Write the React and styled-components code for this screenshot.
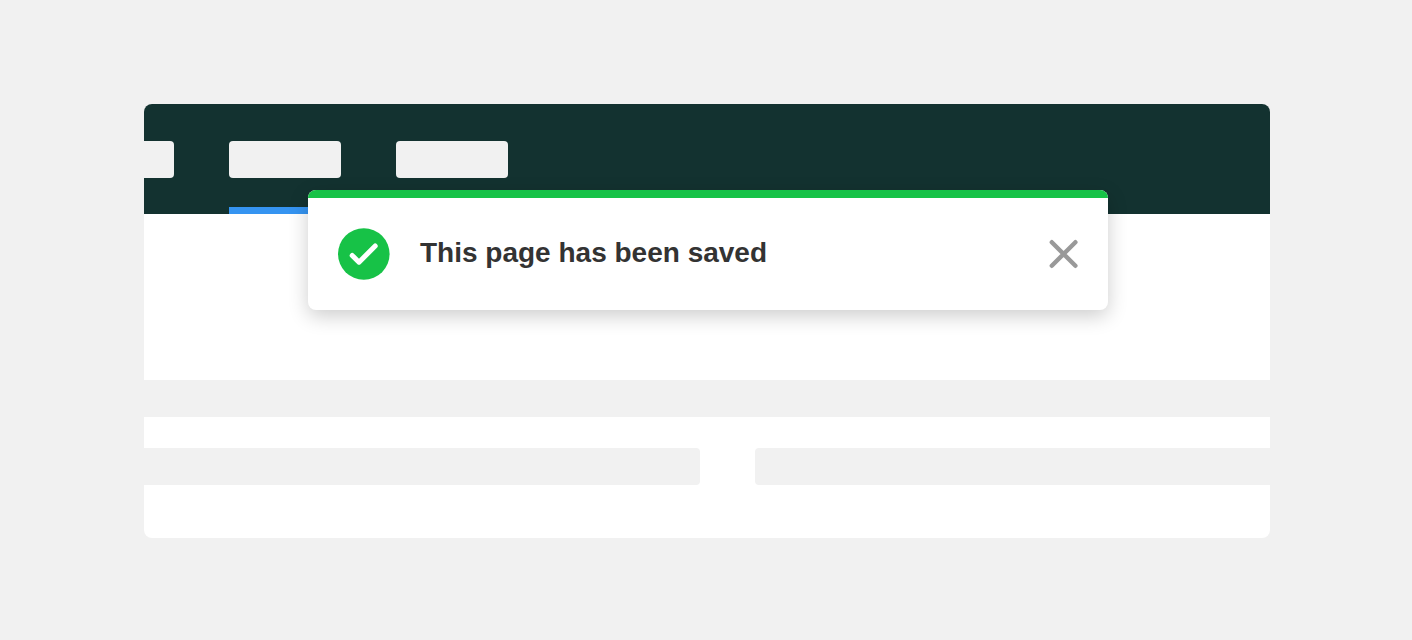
import React from "react";
import styled, { createGlobalStyle } from "styled-components";

const GlobalStyle = createGlobalStyle`
  *, *::before, *::after { box-sizing: border-box; }
  body {
    margin: 0;
    background: #f1f1f1;
    color: #333333;
    font-family: Helvetica, "Liberation Sans", Arial, sans-serif;
  }
`;

const Page = styled.main`
  min-height: 100vh;
  padding: 104px 142px 102px 144px;
`;

const Panel = styled.div`
  position: relative;
  background: #ffffff;
  border-radius: 8px;
`;

const Header = styled.header`
  display: flex;
  gap: 55px;
  background: #133230;
  border-radius: 8px 8px 0 0;
`;

const Tab = styled.div`
  width: ${(p) => (p.$cut ? 30 : 112)}px;
  padding: 37px 0 29px;
  border-bottom: 7px solid ${(p) => (p.$active ? "#3594f1" : "transparent")};
`;

const TabLabel = styled.div`
  height: 37px;
  background: #f1f1f1;
  border-radius: ${(p) => (p.$cut ? "0 4px 4px 0" : "4px")};
`;

const Body = styled.div`
  padding: 166px 0 53px;
`;

const Row = styled.div`
  display: flex;
  gap: 55px;
  & + & {
    margin-top: 31px;
  }
`;

const Block = styled.div`
  flex: ${(p) => p.$grow || 1} 1 0;
  height: 37px;
  background: #f1f1f1;
  border-radius: ${(p) => p.$radius || "0"};
`;

const Toast = styled.div`
  position: absolute;
  top: 86px;
  left: 164px;
  right: 162px;
  display: flex;
  flex-direction: column;
  background: #ffffff;
  border-radius: 8px;
  overflow: hidden;
  box-shadow: 0 6px 20px rgba(0, 0, 0, 0.2);
`;

const ToastAccent = styled.div`
  height: 8px;
  background: #17c247;
`;

const ToastContent = styled.div`
  display: flex;
  align-items: center;
  gap: 30px;
  padding: 30px;
`;

const ToastIcon = styled.svg`
  flex: none;
  width: 52px;
  height: 52px;
`;

const ToastText = styled.p`
  flex: 1;
  margin: 0;
  padding-bottom: 2px;
  font-size: 28px;
  font-weight: 700;
  line-height: 32px;
`;

const CloseButton = styled.button`
  display: flex;
  padding: 0;
  border: 0;
  background: none;
  color: #999999;
  cursor: pointer;
`;

export default function App() {
  return (
    <>
      <GlobalStyle />
      <Page>
        <Panel>
          <Header>
            <Tab $cut>
              <TabLabel $cut />
            </Tab>
            <Tab $active>
              <TabLabel />
            </Tab>
            <Tab>
              <TabLabel />
            </Tab>
          </Header>
          <Body>
            <Row>
              <Block />
            </Row>
            <Row>
              <Block $grow={556} $radius="0 4px 4px 0" />
              <Block $grow={515} $radius="4px 0 0 4px" />
            </Row>
          </Body>
          <Toast role="status">
            <ToastAccent />
            <ToastContent>
              <ToastIcon viewBox="0 0 52 52" aria-hidden="true">
                <circle cx="25.8" cy="26" r="25.8" fill="#17c247" />
                <path
                  d="M14.2 27.4L21 34.2L37.2 18"
                  fill="none"
                  stroke="#ffffff"
                  strokeWidth="5"
                  strokeLinecap="round"
                  strokeLinejoin="round"
                />
              </ToastIcon>
              <ToastText>This page has been saved</ToastText>
              <CloseButton type="button" aria-label="Close">
                <svg width="30" height="30" viewBox="0 0 30 30" aria-hidden="true">
                  <path
                    d="M3.8 3.2L27.4 26.8M27.4 3.2L3.8 26.8"
                    fill="none"
                    stroke="currentColor"
                    strokeWidth="4.4"
                    strokeLinecap="round"
                  />
                </svg>
              </CloseButton>
            </ToastContent>
          </Toast>
        </Panel>
      </Page>
    </>
  );
}
